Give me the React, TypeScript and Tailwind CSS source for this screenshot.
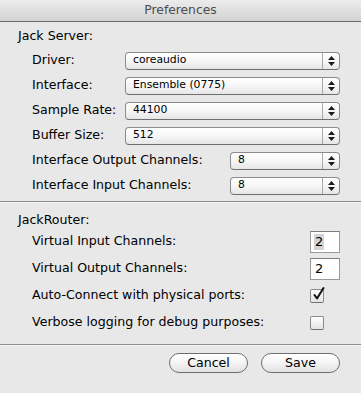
import React from "react";

function Arrows() {
  return (
    <div className="flex w-[17px] flex-col items-center justify-center gap-[2px] border-l border-[#a9a9a9]">
      <svg width="7" height="4" viewBox="0 0 7 4">
        <path d="M3.5 0L7 4H0z" fill="#1a1a1a" />
      </svg>
      <svg width="7" height="4" viewBox="0 0 7 4">
        <path d="M0 0H7L3.5 4z" fill="#1a1a1a" />
      </svg>
    </div>
  );
}

function Select({ value, wide }: { value: string; wide?: boolean }) {
  return (
    <div
      className={
        wide
          ? "flex h-[18px] flex-1 items-stretch rounded-[4px] border border-[#8c8c8c] border-b-[#6f6f6f] bg-gradient-to-b from-white via-[#f6f6f6] to-[#e6e6e6]"
          : "flex h-[18px] w-[110px] items-stretch rounded-[4px] border border-[#8c8c8c] border-b-[#6f6f6f] bg-gradient-to-b from-white via-[#f6f6f6] to-[#e6e6e6]"
      }
    >
      <div className="flex flex-1 items-center pl-[7px] text-[10.8px] leading-none text-black">
        {value}
      </div>
      <Arrows />
    </div>
  );
}

function Row({ label, children, labelW }: { label: string; children: React.ReactNode; labelW: string }) {
  return (
    <div className="flex h-[25px] items-center pl-[32px] pr-[21px]">
      <span className={labelW}>{label}</span>
      {children}
    </div>
  );
}

function Checkbox({ checked }: { checked?: boolean }) {
  return (
    <div className="relative h-[14px] w-[14px] rounded-[2px] border border-[#8a8a8a] border-b-[#707070] bg-gradient-to-b from-white to-[#e4e4e4]">
      {checked && (
        <svg
          className="absolute left-[1px] top-[-3px] overflow-visible"
          width="13"
          height="14"
          viewBox="0 0 13 14"
        >
          <path
            d="M2.5 8L5 11.5L11.5 1"
            fill="none"
            stroke="#111"
            strokeWidth="2"
            strokeLinecap="round"
            strokeLinejoin="round"
          />
        </svg>
      )}
    </div>
  );
}

function Field({ value, selected }: { value: string; selected?: boolean }) {
  return (
    <div className="flex h-[22px] w-[30px] items-center border border-[#9a9a9a] border-t-[#7d7d7d] bg-white pl-[3px]">
      <span
        className={
          selected
            ? "bg-[#d4d4d4] px-[1px] text-[13px] leading-[16px] text-black"
            : "px-[1px] text-[13px] leading-[16px] text-black"
        }
      >
        {value}
      </span>
    </div>
  );
}

function RouterRow({ label, children }: { label: string; children: React.ReactNode }) {
  return (
    <div className="flex h-[27px] items-center pl-[32px] pr-[21px]">
      <span className="flex-1">{label}</span>
      <div className="flex w-[30px] items-center">{children}</div>
    </div>
  );
}

function Separator() {
  return <div className="h-[2px] w-full border-t border-[#8e8e8e] border-b-0 bg-[#f4f4f4]" />;
}

export default function App() {
  return (
    <div className="flex h-[393px] w-[361px] flex-col bg-[#e8e8e8] font-['DejaVu_Sans',sans-serif] text-[12.6px] text-black">
      <div className="flex h-[22px] items-center justify-center border-b border-[#6a6a6a] bg-gradient-to-b from-[#ececec] to-[#d2d2d2] text-[12.3px] text-[#4c4c4c]">
        Preferences
      </div>
      <div className="pl-[18px] pt-[6px] leading-[16px]">Jack Server:</div>
      <div className="mt-[4px] flex flex-col">
        <Row label="Driver:" labelW="w-[93px]">
          <Select value="coreaudio" wide />
        </Row>
        <Row label="Interface:" labelW="w-[93px]">
          <Select value="Ensemble (0775)" wide />
        </Row>
        <Row label="Sample Rate:" labelW="w-[93px]">
          <Select value="44100" wide />
        </Row>
        <Row label="Buffer Size:" labelW="w-[93px]">
          <Select value="512" wide />
        </Row>
        <Row label="Interface Output Channels:" labelW="w-[198px]">
          <Select value="8" />
        </Row>
        <Row label="Interface Input Channels:" labelW="w-[198px]">
          <Select value="8" />
        </Row>
      </div>
      <div className="mt-[3px]">
        <Separator />
      </div>
      <div className="pl-[18px] pt-[9px] leading-[16px]">JackRouter:</div>
      <div className="flex flex-col">
        <RouterRow label="Virtual Input Channels:">
          <Field value="2" selected />
        </RouterRow>
        <RouterRow label="Virtual Output Channels:">
          <Field value="2" />
        </RouterRow>
        <RouterRow label="Auto-Connect with physical ports:">
          <Checkbox checked />
        </RouterRow>
        <RouterRow label="Verbose logging for debug purposes:">
          <Checkbox />
        </RouterRow>
      </div>
      <div className="mt-[8px]">
        <Separator />
      </div>
      <div className="mt-[7px] flex justify-end gap-[13px] pr-[21px]">
        <button className="flex h-[20px] w-[79px] items-center justify-center rounded-full border border-[#6e6e6e] bg-gradient-to-b from-white via-[#f4f4f4] to-[#e2e2e2] text-[12.6px] leading-none text-black">
          Cancel
        </button>
        <button className="flex h-[20px] w-[79px] items-center justify-center rounded-full border border-[#6e6e6e] bg-gradient-to-b from-white via-[#f4f4f4] to-[#e2e2e2] text-[12.6px] leading-none text-black">
          Save
        </button>
      </div>
    </div>
  );
}
